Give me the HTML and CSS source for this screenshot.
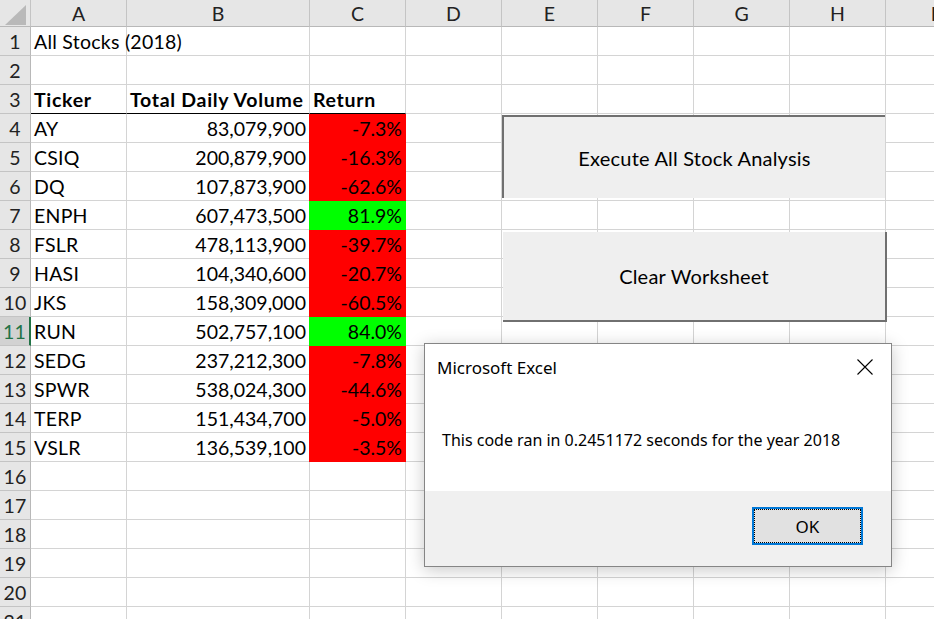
FILE: index.html
```html
<!DOCTYPE html>
<html lang="en">
<head>
<meta charset="utf-8">
<title>All Stocks (2018)</title>
<link rel="stylesheet" href="styles.css">
</head>
<body>
<div class="sheet">
  <div class="cell corner"><svg class="corner-tri" width="21" height="20" viewBox="0 0 21 20"><polygon points="21,0 21,20 0,20" fill="#b9b9b9"/></svg></div>
  <div class="cell ch">A</div><div class="cell ch">B</div><div class="cell ch">C</div><div class="cell ch">D</div><div class="cell ch">E</div><div class="cell ch">F</div><div class="cell ch">G</div><div class="cell ch">H</div><div class="cell ch">I</div>

  <div class="cell rh">1</div><div class="cell txt">All Stocks (2018)</div><div class="cell"></div><div class="cell"></div><div class="cell"></div><div class="cell"></div><div class="cell"></div><div class="cell"></div><div class="cell"></div><div class="cell"></div>
  <div class="cell rh">2</div><div class="cell"></div><div class="cell"></div><div class="cell"></div><div class="cell"></div><div class="cell"></div><div class="cell"></div><div class="cell"></div><div class="cell"></div><div class="cell"></div>
  <div class="cell rh">3</div><div class="cell txt bold underline">Ticker</div><div class="cell txt bold underline">Total Daily Volume</div><div class="cell txt bold underline">Return</div><div class="cell"></div><div class="cell"></div><div class="cell"></div><div class="cell"></div><div class="cell"></div><div class="cell"></div>

  <div class="cell rh">4</div><div class="cell txt">AY</div><div class="cell num">83,079,900</div><div class="cell num neg">-7.3%</div><div class="cell"></div><div class="cell"></div><div class="cell"></div><div class="cell"></div><div class="cell"></div><div class="cell"></div>
  <div class="cell rh">5</div><div class="cell txt">CSIQ</div><div class="cell num">200,879,900</div><div class="cell num neg">-16.3%</div><div class="cell"></div><div class="cell"></div><div class="cell"></div><div class="cell"></div><div class="cell"></div><div class="cell"></div>
  <div class="cell rh">6</div><div class="cell txt">DQ</div><div class="cell num">107,873,900</div><div class="cell num neg">-62.6%</div><div class="cell"></div><div class="cell"></div><div class="cell"></div><div class="cell"></div><div class="cell"></div><div class="cell"></div>
  <div class="cell rh">7</div><div class="cell txt">ENPH</div><div class="cell num">607,473,500</div><div class="cell num pos">81.9%</div><div class="cell"></div><div class="cell"></div><div class="cell"></div><div class="cell"></div><div class="cell"></div><div class="cell"></div>
  <div class="cell rh">8</div><div class="cell txt">FSLR</div><div class="cell num">478,113,900</div><div class="cell num neg">-39.7%</div><div class="cell"></div><div class="cell"></div><div class="cell"></div><div class="cell"></div><div class="cell"></div><div class="cell"></div>
  <div class="cell rh">9</div><div class="cell txt">HASI</div><div class="cell num">104,340,600</div><div class="cell num neg">-20.7%</div><div class="cell"></div><div class="cell"></div><div class="cell"></div><div class="cell"></div><div class="cell"></div><div class="cell"></div>
  <div class="cell rh">10</div><div class="cell txt">JKS</div><div class="cell num">158,309,000</div><div class="cell num neg">-60.5%</div><div class="cell"></div><div class="cell"></div><div class="cell"></div><div class="cell"></div><div class="cell"></div><div class="cell"></div>
  <div class="cell rh sel">11</div><div class="cell txt">RUN</div><div class="cell num">502,757,100</div><div class="cell num pos">84.0%</div><div class="cell"></div><div class="cell"></div><div class="cell"></div><div class="cell"></div><div class="cell"></div><div class="cell"></div>
  <div class="cell rh">12</div><div class="cell txt">SEDG</div><div class="cell num">237,212,300</div><div class="cell num neg">-7.8%</div><div class="cell"></div><div class="cell"></div><div class="cell"></div><div class="cell"></div><div class="cell"></div><div class="cell"></div>
  <div class="cell rh">13</div><div class="cell txt">SPWR</div><div class="cell num">538,024,300</div><div class="cell num neg">-44.6%</div><div class="cell"></div><div class="cell"></div><div class="cell"></div><div class="cell"></div><div class="cell"></div><div class="cell"></div>
  <div class="cell rh">14</div><div class="cell txt">TERP</div><div class="cell num">151,434,700</div><div class="cell num neg">-5.0%</div><div class="cell"></div><div class="cell"></div><div class="cell"></div><div class="cell"></div><div class="cell"></div><div class="cell"></div>
  <div class="cell rh">15</div><div class="cell txt">VSLR</div><div class="cell num">136,539,100</div><div class="cell num neg">-3.5%</div><div class="cell"></div><div class="cell"></div><div class="cell"></div><div class="cell"></div><div class="cell"></div><div class="cell"></div>

  <div class="cell rh">16</div><div class="cell"></div><div class="cell"></div><div class="cell"></div><div class="cell"></div><div class="cell"></div><div class="cell"></div><div class="cell"></div><div class="cell"></div><div class="cell"></div>
  <div class="cell rh">17</div><div class="cell"></div><div class="cell"></div><div class="cell"></div><div class="cell"></div><div class="cell"></div><div class="cell"></div><div class="cell"></div><div class="cell"></div><div class="cell"></div>
  <div class="cell rh">18</div><div class="cell"></div><div class="cell"></div><div class="cell"></div><div class="cell"></div><div class="cell"></div><div class="cell"></div><div class="cell"></div><div class="cell"></div><div class="cell"></div>
  <div class="cell rh">19</div><div class="cell"></div><div class="cell"></div><div class="cell"></div><div class="cell"></div><div class="cell"></div><div class="cell"></div><div class="cell"></div><div class="cell"></div><div class="cell"></div>
  <div class="cell rh">20</div><div class="cell"></div><div class="cell"></div><div class="cell"></div><div class="cell"></div><div class="cell"></div><div class="cell"></div><div class="cell"></div><div class="cell"></div><div class="cell"></div>
  <div class="cell rh">21</div><div class="cell"></div><div class="cell"></div><div class="cell"></div><div class="cell"></div><div class="cell"></div><div class="cell"></div><div class="cell"></div><div class="cell"></div><div class="cell"></div>
</div>

<div class="form-btn btn-exec">Execute All Stock Analysis</div>
<div class="form-btn btn-clear">Clear Worksheet</div>

<div class="dialog" role="dialog">
  <div class="dlg-title">
    <span>Microsoft Excel</span>
    <svg class="dlg-close" width="16" height="16" viewBox="0 0 16 16"><path d="M0.5 0.5 L15.5 15.5 M15.5 0.5 L0.5 15.5" stroke="#000" stroke-width="1.1" fill="none"/></svg>
  </div>
  <div class="dlg-body">This code ran in 0.2451172 seconds for the year 2018</div>
  <div class="dlg-foot"><button class="ok-btn">OK</button></div>
</div>
</body>
</html>
```
FILE: styles.css
```css
html, body {
  margin: 0;
  padding: 0;
  background: #fff;
  overflow: hidden;
}
body {
  width: 934px;
  height: 619px;
  position: relative;
  font-family: Lato, "Liberation Sans", sans-serif;
  color: #000;
}
.sheet {
  display: grid;
  grid-template-columns: 31px 96px 183px 96px 96px 96px 96px 96px 96px 96px;
  grid-template-rows: 27px repeat(21, 29px);
  width: 982px;
}
.cell {
  box-sizing: border-box;
  border-right: 1px solid #d4d4d4;
  border-bottom: 1px solid #d4d4d4;
  font-size: 19.5px;
  line-height: 30px;
  white-space: nowrap;
  overflow: visible;
  padding: 0 3px;
}
.ch {
  background: #e6e6e6;
  border-right-color: #c4c4c4;
  border-bottom-color: #b8b8b8;
  text-align: center;
  line-height: 27px;
  color: #222;
}
.corner {
  background: #e6e6e6;
  border-right-color: #c4c4c4;
  border-bottom-color: #b8b8b8;
  position: relative;
  padding: 0;
}
.corner-tri {
  position: absolute;
  right: 4px;
  bottom: 1px;
}
.rh {
  background: #e6e6e6;
  border-right-color: #b8b8b8;
  border-bottom-color: #c4c4c4;
  text-align: center;
  padding: 0;
  color: #222;
  letter-spacing: 0.3px;
}
.rh.sel {
  background: #d2d2d2;
  color: #217346;
  border-right: 2px solid #217346;
}
.txt {
  text-align: left;
  padding-left: 3px;
  letter-spacing: 0.25px;
}
.bold {
  font-weight: 700;
  letter-spacing: 0.7px;
}
.underline {
  border-bottom: 1px solid #000;
}
.num {
  text-align: right;
  padding-right: 3px;
}
.neg {
  background: #ff0000;
  border-right-color: #ff0000;
  border-bottom-color: #ff0000;
  box-shadow: -1px 0 0 #ff0000;
}
.pos {
  background: #00ff00;
  border-right-color: #00ff00;
  border-bottom-color: #00ff00;
  box-shadow: -1px 0 0 #00ff00;
}

.form-btn {
  position: absolute;
  box-sizing: border-box;
  background: #efefef;
  display: flex;
  align-items: center;
  justify-content: center;
  font-family: Lato, "Liberation Sans", sans-serif;
  font-size: 20px;
  letter-spacing: 0.2px;
  color: #000;
}
.btn-exec {
  left: 502px;
  top: 115px;
  width: 383px;
  height: 83px;
  border-top: 2px solid #707070;
  border-left: 2px solid #707070;
  padding-top: 1px;
}
.btn-clear {
  left: 503px;
  top: 232px;
  width: 384px;
  height: 90px;
  border-right: 2px solid #707070;
  border-bottom: 2px solid #707070;
}

.dialog {
  position: absolute;
  left: 424px;
  top: 343px;
  width: 468px;
  height: 224px;
  box-sizing: border-box;
  border: 1px solid #858585;
  background: #fff;
  box-shadow: 0 3px 16px rgba(0, 0, 0, 0.22);
  display: flex;
  flex-direction: column;
  font-family: "Noto Sans", "Open Sans", sans-serif;
  font-size: 16px;
  color: #000;
}
.dlg-title {
  height: 46px;
  display: flex;
  align-items: center;
  justify-content: space-between;
  padding: 0 18px 0 12px;
  font-size: 17px;
}
.dlg-body {
  height: 101px;
  box-sizing: border-box;
  padding: 38px 0 0 17px;
  line-height: 24px;
}
.dlg-foot {
  flex: 1;
  background: #f0f0f0;
  display: flex;
  justify-content: flex-end;
  align-items: flex-start;
  padding: 16px 28px 0 0;
}
.ok-btn {
  width: 111px;
  height: 38px;
  box-sizing: border-box;
  border: 2px solid #0078d7;
  background: #e1e1e1;
  outline: 1px dotted #000;
  outline-offset: -3px;
  font-family: "Noto Sans", "Open Sans", sans-serif;
  font-size: 17px;
  color: #000;
  padding: 0;
}
```
